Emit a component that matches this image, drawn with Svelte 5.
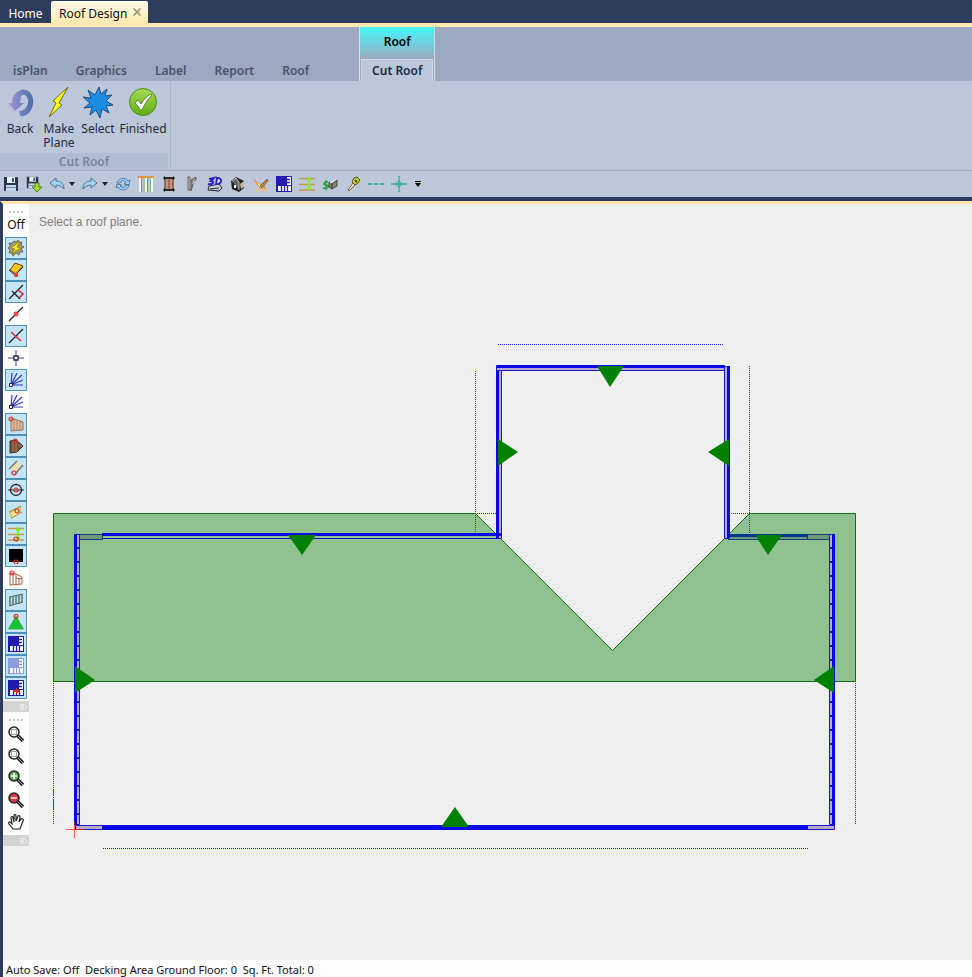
<script>
    const menuTabs = ['isPlan', 'Graphics', 'Label', 'Report', 'Roof']

    const ribbon = [
        {
            label: 'Back',
            art: `<path d="M15 5C22 0 31 8 29 18C28 26 22 31 16 30L15 25C21 25 24 20 24 15C24 10 20 7 17 10L16 17H20L11 25L4 17H8C8 12 10 7 15 5Z" fill="url(#back)"/>`,
        },
        {
            label: 'Make Plane',
            art: `<path d="M25 1L10 15L13 17L6 31L19 19L16 17Z" fill="#ffff12" stroke="#6b6b20"/>`,
        },
        {
            label: 'Select',
            art: `<path d="M17 1L19 8L25 3L23 10L30 9L24 15L31 19L24 20L27 27L20 23L18 32L14 24L8 29L10 21L2 22L8 17L1 11L9 12L6 4L13 9Z" fill="#1c8de4" stroke="#234e78"/>`,
        },
        {
            label: 'Finished',
            art: `<circle cx="16" cy="16" r="13.5" fill="url(#ok)" stroke="#4f8a1c"/><path d="M8 17L11 14L14 18C17 13 20 10 24 8L25 9C20 14 17 19 15 24H13C12 21 10 19 8 17Z" fill="#fff" stroke="#47741b" stroke-width=".8"/>`,
        },
    ]

    const plan = (ink, extra = '') =>
        `<path d="M0 0H16V16H0Z" fill="${ink}"/><path d="M11 1H15V9H11ZM2 10H15V15H2Z" fill="#fff"/><path d="M11 3.500H14M11 6.500H14M5.500 10V15M8.500 10V15M11.500 10V15" stroke="${ink}" stroke-width="1.300"/>${extra}`
    const rays = `<path d="M3 13L4 1M3 13L9 1M3 13L14 3M3 13L15 8M3 13H15" stroke="#3a35c8" stroke-width="1.200"/><path d="M1.500 11.500H4.500V14.500H1.500Z" fill="#fff" stroke="#222244"/>`
    const beams = `<path d="M0 2.500H16M0 8.500H16M0 14H16" stroke="#c29a4a" stroke-width="1.500"/><path d="M10 1V14M8 4H12M8 12H12" stroke="#7ff02c" stroke-width="2"/>`
    const lens = (fill, mark) =>
        `<path d="M9 9L15 15" stroke="#222" stroke-width="3.500"/><path d="M10 10L15 15" stroke="#b8b0b0"/><circle cx="6" cy="6" r="5" fill="${fill}" stroke="#222" stroke-width="1.500"/>${mark}`
    const redDot = (x, y) => `<circle cx="${x}" cy="${y}" r="2" fill="none" stroke="#e02828" stroke-width="1.200"/>`
    const floppy = `<path d="M1 1H14L15 2V15H1Z" fill="#25384e"/><path d="M4 1H12V7H4Z" fill="#eaf0f6"/><path d="M9 2H11V6H9Z" fill="#385577"/><path d="M3 9H13V15H3Z" fill="#c8d8e8"/><path d="M3 11.500H13" stroke="#6d87a0"/>`

    const quick = [
        { name: 'Save', art: floppy },
        {
            name: 'Save as',
            art: `<g transform="scale(.82)">${floppy}</g><path d="M9 7H13V11H16L11 16L6 11H9Z" fill="#a6dc29" stroke="#3f7213" stroke-width=".8"/>`,
        },
        {
            name: 'Undo',
            menu: true,
            art: `<path d="M1 7L7 2V5C12 5 15 8 15 13C12 10 10 9 7 9V12Z" fill="#a2d4ef" stroke="#47769d"/>`,
        },
        {
            name: 'Redo',
            menu: true,
            art: `<path d="M15 7L9 2V5C4 5 1 8 1 13C4 10 6 9 9 9V12Z" fill="#a2d4ef" stroke="#47769d"/>`,
        },
        {
            name: 'Refresh',
            art: `<path d="M2 7C3 3 10 0 13 5L15 4L14 9L9 8L11 6C9 4 6 4 5 7ZM14 9C13 14 6 16 3 11L1 12L2 8L7 9L5 10C8 12 10 12 11 9Z" fill="#9dd2f5" stroke="#386b99" stroke-width=".8"/>`,
        },
        {
            name: 'Studs',
            art: `<path d="M0 1H16" stroke="#e09642" stroke-width="2"/><path d="M2 2V16M8 2V16M14 2V16" stroke="#f7fbfa" stroke-width="2"/><path d="M3.500 2V16M9.500 2V16" stroke="#38a9a3"/><path d="M6 2V16M12.500 2V16" stroke="#80c26e"/>`,
        },
        {
            name: 'Post',
            art: `<path d="M4 2H12V14H4Z" fill="#c89679" stroke="#4b2a1c"/><path d="M8 3V13" stroke="#6c4333"/><path d="M3 2H13M3 14H13" stroke="#111" stroke-width="1.500"/><path d="M4 0L2 2L4 4ZM12 0L14 2L12 4ZM4 12L2 14L4 16ZM12 12L14 14L12 16Z" fill="#111"/>`,
        },
        {
            name: 'Bracket',
            art: `<path d="M4 1H6V14H4ZM7 4L12 1V4L9 6V9L7 15Z" fill="#888684" stroke="#55504e" stroke-width=".8"/><path d="M5 2V13M8 8L11 3" stroke="#d6d3d0" stroke-width=".7"/>`,
        },
        {
            name: '3D view',
            art: `<path d="M2 10L12 8L15 12L12 15L1 14Z" fill="#c5d0dd" stroke="#222"/><path d="M3 13L12 12" stroke="#222"/><path d="M2 3L7 2L4 5C8 5 6 9 1 8" fill="none" stroke="#2a21c0" stroke-width="2"/><path d="M10 2L9 8C14 9 17 2 10 2Z" fill="#dfe6f2" stroke="#2a21c0" stroke-width="1.800"/>`,
        },
        {
            name: 'Perspective',
            art: `<path d="M1 5L6 1L14 5V12L9 16L2 13Z" fill="#222"/><path d="M2 5L6 2L9 6V14" fill="#666" stroke="#ddd" stroke-width=".8"/><path d="M10 8L14 5V11L11 13Z" fill="#b8b8a8"/><path d="M4 9H6V12H4Z" fill="#fff"/>`,
        },
        {
            name: 'Measure',
            art: `<path d="M1 4L7 12H13L1 4Z" fill="#f9dfad" stroke="#d88a36"/><path d="M7 10L14 3L15 5L9 12Z" fill="#b88a45" stroke="#774821" stroke-width=".7"/><path d="M2 13H14V15H4Z" fill="#f2bc83"/>`,
        },
        { name: 'Floor plan', art: plan('#241bb4') },
        { name: 'Beams', art: beams },
        {
            name: 'Cost',
            art: `<path d="M6 6C1 5 1 9 4 9C8 9 7 13 1 12M4 4V14" fill="none" stroke="#21a442" stroke-width="1.500"/><path d="M7 6L10 8V13L7 11ZM10 8L15 4V10L10 13Z" fill="#8a806b" stroke="#4b4b45"/><path d="M8 7L14 3" stroke="#eee"/>`,
        },
        {
            name: 'Paint',
            art: `<path d="M3 14L8 7L10 9L4 15Z" fill="#f4e3ca" stroke="#776141"/><path d="M9 2L12 1L15 4L13 7L10 9L7 6Z" fill="#cccb24" stroke="#555623"/><path d="M10 4L12 6" stroke="#52602a" stroke-width="2"/>`,
        },
        { name: 'Dashed line', art: `<path d="M0 8H4M6 8H10M12 8H16" stroke="#30a294" stroke-width="1.500"/>` },
        {
            name: 'Crosshair',
            art: `<path d="M8 0V16M0 8H16" stroke="#38a89a" stroke-width="1.300"/><circle cx="8" cy="8" r="2.500" fill="none" stroke="#38a89a"/>`,
        },
    ]

    const snaps = [
        {
            name: 'Auto snap',
            on: true,
            art: `<path d="M6 1L8 2L10 0L11 3L14 2L13 5L16 7L13 9L15 12L12 12L11 15L8 13L5 16L4 13L1 13L2 10L0 8L2 6L1 3L4 3Z" fill="#a09678" stroke="#5d5848" stroke-width=".8"/><path d="M12 1L3 8L7 9L3 14L13 8L9 7Z" fill="#ffe817" stroke="#8a7b12" stroke-width=".7"/>`,
        },
        {
            name: 'Endpoint',
            on: true,
            art: `<path d="M7 1L15 4L8 12L2 8Z" fill="#ffc51e" stroke="#5e4618"/><path d="M1 8L7 13L15 5" fill="none" stroke="#222"/><circle cx="8" cy="13" r="2.200" fill="#d94325"/>`,
        },
        {
            name: 'Perpendicular',
            on: true,
            art: `<path d="M1 15L15 1M4 7L12 15" stroke="#222" stroke-width="1.300"/><path d="M10 6L15 10L11 14" fill="none" stroke="#dd1d38" stroke-width="1.500"/>`,
        },
        {
            name: 'Midpoint',
            art: `<path d="M1 15L15 1" stroke="#222" stroke-width="1.300"/><circle cx="8" cy="8" r="2" fill="#ed6060" stroke="#d32424"/>`,
        },
        {
            name: 'Intersection',
            on: true,
            art: `<path d="M1 15L15 1" stroke="#222" stroke-width="1.300"/><path d="M3 4L13 13" stroke="#dc293c" stroke-width="1.500"/>`,
        },
        {
            name: 'Point',
            art: `<path d="M8 0V16M0 8H16" stroke="#4647a6"/><path d="M6 6H10V10H6Z" fill="#fff" stroke="#202040" stroke-width="1.300"/>`,
        },
        { name: 'Angles', on: true, art: rays },
        { name: 'Relative angles', art: rays },
        {
            name: 'Wall',
            on: true,
            art: `<path d="M3 2L15 6V14L3 15Z" fill="#e0bc9e" stroke="#977258"/><path d="M6 3V15M9 4V15M12 5V14" stroke="#a98369"/>${redDot(3, 3)}`,
        },
        {
            name: 'Wall face',
            on: true,
            art: `<path d="M2 3L8 2L15 8L9 14L2 15Z" fill="#78513b" stroke="#3c2a21"/><path d="M5 4V14M8 3V14M10 7L14 8" stroke="#aa8064"/>${redDot(7, 3)}`,
        },
        {
            name: 'Edge',
            on: true,
            art: `<path d="M2 8L9 1L15 6L7 13Z" fill="#e2e1ba"/><path d="M1 9L9 1M8 13L15 5" stroke="#777462" stroke-width="1.400"/>${redDot(6, 13)}`,
        },
        {
            name: 'Center',
            on: true,
            art: `<circle cx="8" cy="8" r="5.500" fill="none" stroke="#222" stroke-width="1.300"/><path d="M0 8H16" stroke="#222"/>${redDot(8, 8)}`,
        },
        {
            name: 'Board',
            on: true,
            art: `<path d="M1 8L13 2V9L3 15Z" fill="#d9ca62"/><path d="M1 8L13 2M3 14L14 8" stroke="#80753d" stroke-width=".8"/><path d="M3 10L12 5M4 12L12 8" stroke="#f6eda8" stroke-width="1.500"/>${redDot(9, 7)}`,
        },
        { name: 'Joist', on: true, art: beams + redDot(8, 13) },
        { name: 'Solid', on: true, art: `<path d="M1 1H15V14H1Z" fill="#000"/>${redDot(8, 14)}` },
        {
            name: 'Panel',
            art: `<path d="M2 3L8 4V8L14 9V14L2 15ZM5 4V14M8 8V14M11 9V14" fill="none" stroke="#a7614a"/><path d="M8 4L14 7V9" stroke="#a7614a"/>${redDot(4, 3)}`,
        },
        {
            name: 'Fence',
            on: true,
            art: `<path d="M1 5L15 2M1 14L15 10" stroke="#397455"/><path d="M2 5V14M5 4V13M8 4V12M11 3V12M14 2V11" stroke="#587563" stroke-width="1.500"/>`,
        },
        {
            name: 'Roof plane',
            on: true,
            art: `<path d="M8 2L15.500 15H.5Z" fill="#17c52f" stroke="#3a9b43" stroke-width=".7"/>${redDot(8, 2.5)}`,
        },
        { name: 'Plan layer', on: true, art: plan('#211aac') },
        { name: 'Faded plan layer', on: true, art: plan('#8c9cdd') },
        { name: 'Plan marker', on: true, art: plan('#211aac', `<path d="M5 10H8V8L12 11L8 14V12H5Z" fill="#e8262f"/>`) },
    ]

    const frame = `<path d="M3.500 3.500H8.500V8.500H3.500Z" fill="#fff" stroke="#888" stroke-width=".8"/>`
    const zooms = [
        { name: 'Zoom window', art: lens('#f5f5f5', frame) },
        { name: 'Zoom extents', art: lens('#f5f5f5', frame) },
        { name: 'Zoom in', art: lens('#69ad61', `<path d="M3 6H9M6 3V9" stroke="#e6ffe2" stroke-width="1.500"/>`) },
        { name: 'Zoom out', art: lens('#d83b42', `<path d="M3 6H9" stroke="#ffe6e6" stroke-width="1.500"/>`) },
        {
            name: 'Pan',
            art: `<path d="M5 15L1 10C0 8 2 7 3 9L4 10L3 4C3 2 5 2 5 4L6 8V2C6 0 8 0 8 2V7L10 2C11 1 12 2 12 3L11 8L13 5C14 4 16 5 15 7L12 15Z" fill="#fff" stroke="#222" stroke-width="1.200"/>`,
        },
    ]

    // wall blocking, one tick every 14 units
    const ticks = Array.from({ length: 20 }, (_, i) => 548 + i * 14)

    const slopes = [
        '597,366 624,366 610,387',
        '498,439 498,466 518,452',
        '729,439 729,466 708,452',
        '288,535 316,535 302,555',
        '755,535 782,535 768,555',
        '75,666 75,693 95,680',
        '834,666 834,693 814,680',
        '441,827 469,827 455,807',
    ]
</script>

{#snippet icon(art)}
    <svg class="icon" viewBox="0 0 16 16" fill="none" aria-hidden="true">{@html art}</svg>
{/snippet}

{#snippet grip()}
    <div class="grip"><i></i><i></i><i></i><i></i></div>
{/snippet}

{#snippet toolFoot()}
    <div class="tool-foot">
        <svg viewBox="0 0 8 8"><path d="M1 1V7M3 1L7 4L3 7Z" fill="#ccc" stroke="#f4f4f4" /></svg>
    </div>
{/snippet}

<div class="app">
    <header class="title-bar">
        <button class="home">Home</button>
        <div class="doc-tab">
            <button>Roof Design</button>
            <button class="close" aria-label="Close Roof Design">
                <svg viewBox="0 0 8 8"><path d="M.5 .5L7.500 7.500M7.500 .5L.5 7.500" stroke="#978a6e" stroke-width="1.500" /></svg>
            </button>
        </div>
    </header>

    <nav class="menu">
        {#each menuTabs as tab}
            <button class="menu-tab">{tab}</button>
        {/each}
        <div class="context">
            <div class="context-title">Roof</div>
            <button class="context-tab">Cut Roof</button>
        </div>
    </nav>

    <div class="ribbon">
        <section class="group">
            <div class="group-items">
                {#each ribbon as item}
                    <button class="big">
                        <svg viewBox="0 0 32 32" aria-hidden="true">
                            <defs>
                                <linearGradient id="back">
                                    <stop stop-color="#aa94d8" />
                                    <stop offset="1" stop-color="#496fa7" />
                                </linearGradient>
                                <linearGradient id="ok" x2="0" y2="1">
                                    <stop stop-color="#a8dc55" />
                                    <stop offset="1" stop-color="#5fae14" />
                                </linearGradient>
                            </defs>
                            {@html item.art}
                        </svg>
                        <span>{item.label}</span>
                    </button>
                {/each}
            </div>
            <div class="group-title">Cut Roof</div>
        </section>
    </div>

    <div class="quick">
        {#each quick as item}
            <button aria-label={item.name}>{@render icon(item.art)}</button>
            {#if item.menu}
                <button class="arrow" aria-label="{item.name} history">
                    <svg viewBox="0 0 6 4"><path d="M0 0H6L3 4Z" fill="#172337" /></svg>
                </button>
            {/if}
        {/each}
        <button class="arrow more" aria-label="Customize toolbar">
            <svg viewBox="0 0 6 6"><path d="M0 0H6V1H0ZM0 2H6L3 6Z" /></svg>
        </button>
    </div>

    <main class="workspace">
        <aside class="tools">
            {@render grip()}
            <button class="off">Off</button>
            {#each snaps as tool}
                <button class="tool" class:on={tool.on} aria-label={tool.name}>{@render icon(tool.art)}</button>
            {/each}
            {@render toolFoot()}
            {@render grip()}
            {#each zooms as tool}
                <button class="tool" aria-label={tool.name}>{@render icon(tool.art)}</button>
            {/each}
            {@render toolFoot()}
        </aside>

        <section class="canvas">
            <p class="prompt">Select a roof plane.</p>
            <svg class="drawing" viewBox="29 204 943 756" preserveAspectRatio="xMinYMin meet">
                <g class="overhang">
                    <path d="M498 344.500H724M475.500 371V534M749.500 366V539M53.500 535V825M855.500 535V825M103 848.500H808M103 513.500H501M729 513.500H750" />
                </g>

                <!-- walls under the roof plane -->
                <g class="wall">
                    <path d="M76.500 534.500H102.500V539.500H76.500ZM728.500 534.500H829.500V539.500H728.500ZM807.500 535V539" />
                    <path class="face" d="M728 535.500H808" />
                </g>

                <path class="plane" d="M53.500 513.500H475.500L612.500 650.500L749.500 513.500H855.500V681.500H53.500Z" />

                <g class="wall">
                    <path d="M496.500 365.500H724.500V370.500H496.500ZM496.500 370.500H501.500V538.500H496.500ZM724.500 366.500H729.500V538.500H724.500Z" />
                    <path d="M74.500 534.500H79.500V824.500H74.500ZM829.500 534.500H834.500V824.500H829.500Z" />
                    <path d="M75.500 825.500H102.500V829.500H75.500ZM807.500 825.500H834.500V829.500H807.500Z" />
                    <path d="M102 538.500H501" />
                    {#each ticks as y}
                        <path class="tick" d="M77 {y}H80M829 {y}H833" />
                    {/each}
                    <path class="face" d="M497 366.500H724M497.500 371V538M728.500 366V538M102 534.500H501M75.500 534V825M833.500 534V825" />
                    <path class="face low" d="M102 827.500H808" />
                </g>

                <path d="M53.500 789V796M53.500 799V809" stroke="#285b78" />
                {#each slopes as points}
                    <polygon {points} fill="#008000" />
                {/each}
                <path d="M66 829.500H84M74.500 822V838" stroke="#ff2020" opacity=".75" />
            </svg>
        </section>
    </main>

    <footer class="status">Auto Save: Off&nbsp; Decking Area Ground Floor: 0&nbsp; Sq. Ft. Total: 0</footer>
</div>

<style>
    :global(body) {
        margin: 0;
    }

    .app {
        display: flex;
        flex-direction: column;
        height: 100vh;
        overflow: hidden;
        background: #efefef;
        font: 12px/14px 'Noto Sans', 'Open Sans', sans-serif;
        color: #1d2b44;
    }

    button {
        margin: 0;
        padding: 0;
        border: 0;
        background: none;
        font: inherit;
        color: inherit;
    }

    svg {
        display: block;
    }

    .title-bar {
        flex: none;
        display: flex;
        align-items: flex-end;
        height: 23px;
        border-bottom: 4px solid #ffe9ae;
        background: #2c3d5b;
    }

    .home {
        width: 51px;
        height: 19px;
        color: #fff;
    }

    .doc-tab {
        display: flex;
        align-items: center;
        gap: 6px;
        height: 22px;
        padding: 0 7px 0 8px;
        border-radius: 2px 2px 0 0;
        background: linear-gradient(#fffaf0, #ffe9ae);
        color: #111;
    }

    .doc-tab button {
        padding-top: 3px;
    }

    .doc-tab .close {
        padding: 0;
    }

    .close svg {
        width: 8px;
        height: 8px;
    }

    .menu {
        flex: none;
        display: flex;
        align-items: flex-end;
        height: 54px;
        padding-left: 13px;
        background: #9ca9c0;
        font-weight: 600;
    }

    .menu-tab {
        height: 21px;
        margin-right: 28px;
        color: #48546a;
    }

    .context {
        display: flex;
        flex-direction: column;
        width: 74px;
        height: 54px;
        margin-left: 22px;
        border: solid #d4deea;
        border-width: 0 1px;
        background: linear-gradient(#44f7fb, #9ca9c0 32px);
        text-align: center;
    }

    .context-title {
        flex: 1;
        line-height: 30px;
        color: #000;
    }

    .context-tab {
        height: 22px;
        margin: 0 1px;
        border: solid #cfd8e5;
        border-width: 1px 1px 0;
        background: #bcc7d9;
    }

    .ribbon {
        flex: none;
        display: flex;
        background: #bcc7d9;
        border-bottom: 1px solid #a4b0c4;
    }

    .group {
        display: flex;
        flex-direction: column;
        width: 170px;
        height: 89px;
        border-right: 1px solid #aab6ca;
    }

    .group-items {
        flex: 1;
        display: grid;
        grid-template-columns: 38px 40px 38px 52px;
        align-items: start;
        padding: 5px 1px 0;
    }

    .big {
        display: flex;
        flex-direction: column;
        align-items: center;
        gap: 4px;
    }

    .big svg {
        width: 32px;
        height: 32px;
    }

    .group-title {
        height: 17px;
        margin-right: 2px;
        background: #b1bdd1;
        color: #77869e;
        font-weight: 600;
        line-height: 17px;
        text-align: center;
    }

    .quick {
        flex: none;
        display: flex;
        align-items: center;
        gap: 7px;
        height: 26px;
        padding-left: 3px;
        border-bottom: 4px solid #2c3d5b;
        background: #bcc7d9;
    }

    .icon {
        width: 16px;
        height: 16px;
    }

    .arrow {
        width: 6px;
        margin-left: -3px;
    }

    .arrow svg {
        width: 6px;
    }

    .more {
        margin-left: 1px;
    }

    .workspace {
        flex: 1;
        display: flex;
        min-height: 0;
        border-left: 3px solid #2c3d5b;
        border-top: 3px solid #ffe4ae;
    }

    .tools {
        flex: none;
        align-self: flex-start;
        display: flex;
        flex-direction: column;
        align-items: center;
        width: 26px;
        background: #fdfdfd;
    }

    .grip {
        display: flex;
        gap: 2px;
        padding: 7px 0 2px;
    }

    .grip i {
        width: 2px;
        height: 2px;
        background: #c6c6c6;
    }

    .off {
        height: 22px;
        padding-bottom: 2px;
        color: #111;
    }

    .tool {
        box-sizing: border-box;
        display: grid;
        place-items: center;
        width: 22px;
        height: 22px;
        border: 1px solid transparent;
    }

    .on {
        border-color: #4e91b8;
        background: #c5e5f4;
    }

    .tool-foot {
        display: flex;
        justify-content: flex-end;
        align-items: center;
        align-self: stretch;
        height: 11px;
        margin-top: 2px;
        padding-right: 1px;
        background: #d4d4d4;
    }

    .tool-foot svg {
        width: 8px;
        height: 8px;
    }

    .canvas {
        position: relative;
        flex: 1;
        min-width: 0;
    }

    .prompt {
        position: absolute;
        top: 11px;
        left: 10px;
        margin: 0;
        color: #808080;
        font: 12px/14px 'Liberation Sans', sans-serif;
    }

    .drawing {
        width: 100%;
        height: 100%;
    }

    .overhang {
        fill: none;
        stroke: #2020ff;
        stroke-dasharray: 1 1;
    }

    .plane {
        fill: rgb(0 128 0 / 40%);
        stroke: #146e14;
    }

    .wall {
        fill: #b9abc8;
        stroke: #1717c8;
    }

    .wall .tick {
        stroke-width: 2;
    }

    .wall .face {
        fill: none;
        stroke: #0808e8;
        stroke-width: 3;
    }

    .wall .low {
        stroke-width: 5;
    }

    .status {
        flex: none;
        box-sizing: border-box;
        height: 17px;
        padding: 3px 0 0 3px;
        border-left: 3px solid #2c3d5b;
        background: #fdfdfd;
        color: #111;
        font-size: 11px;
    }
</style>
